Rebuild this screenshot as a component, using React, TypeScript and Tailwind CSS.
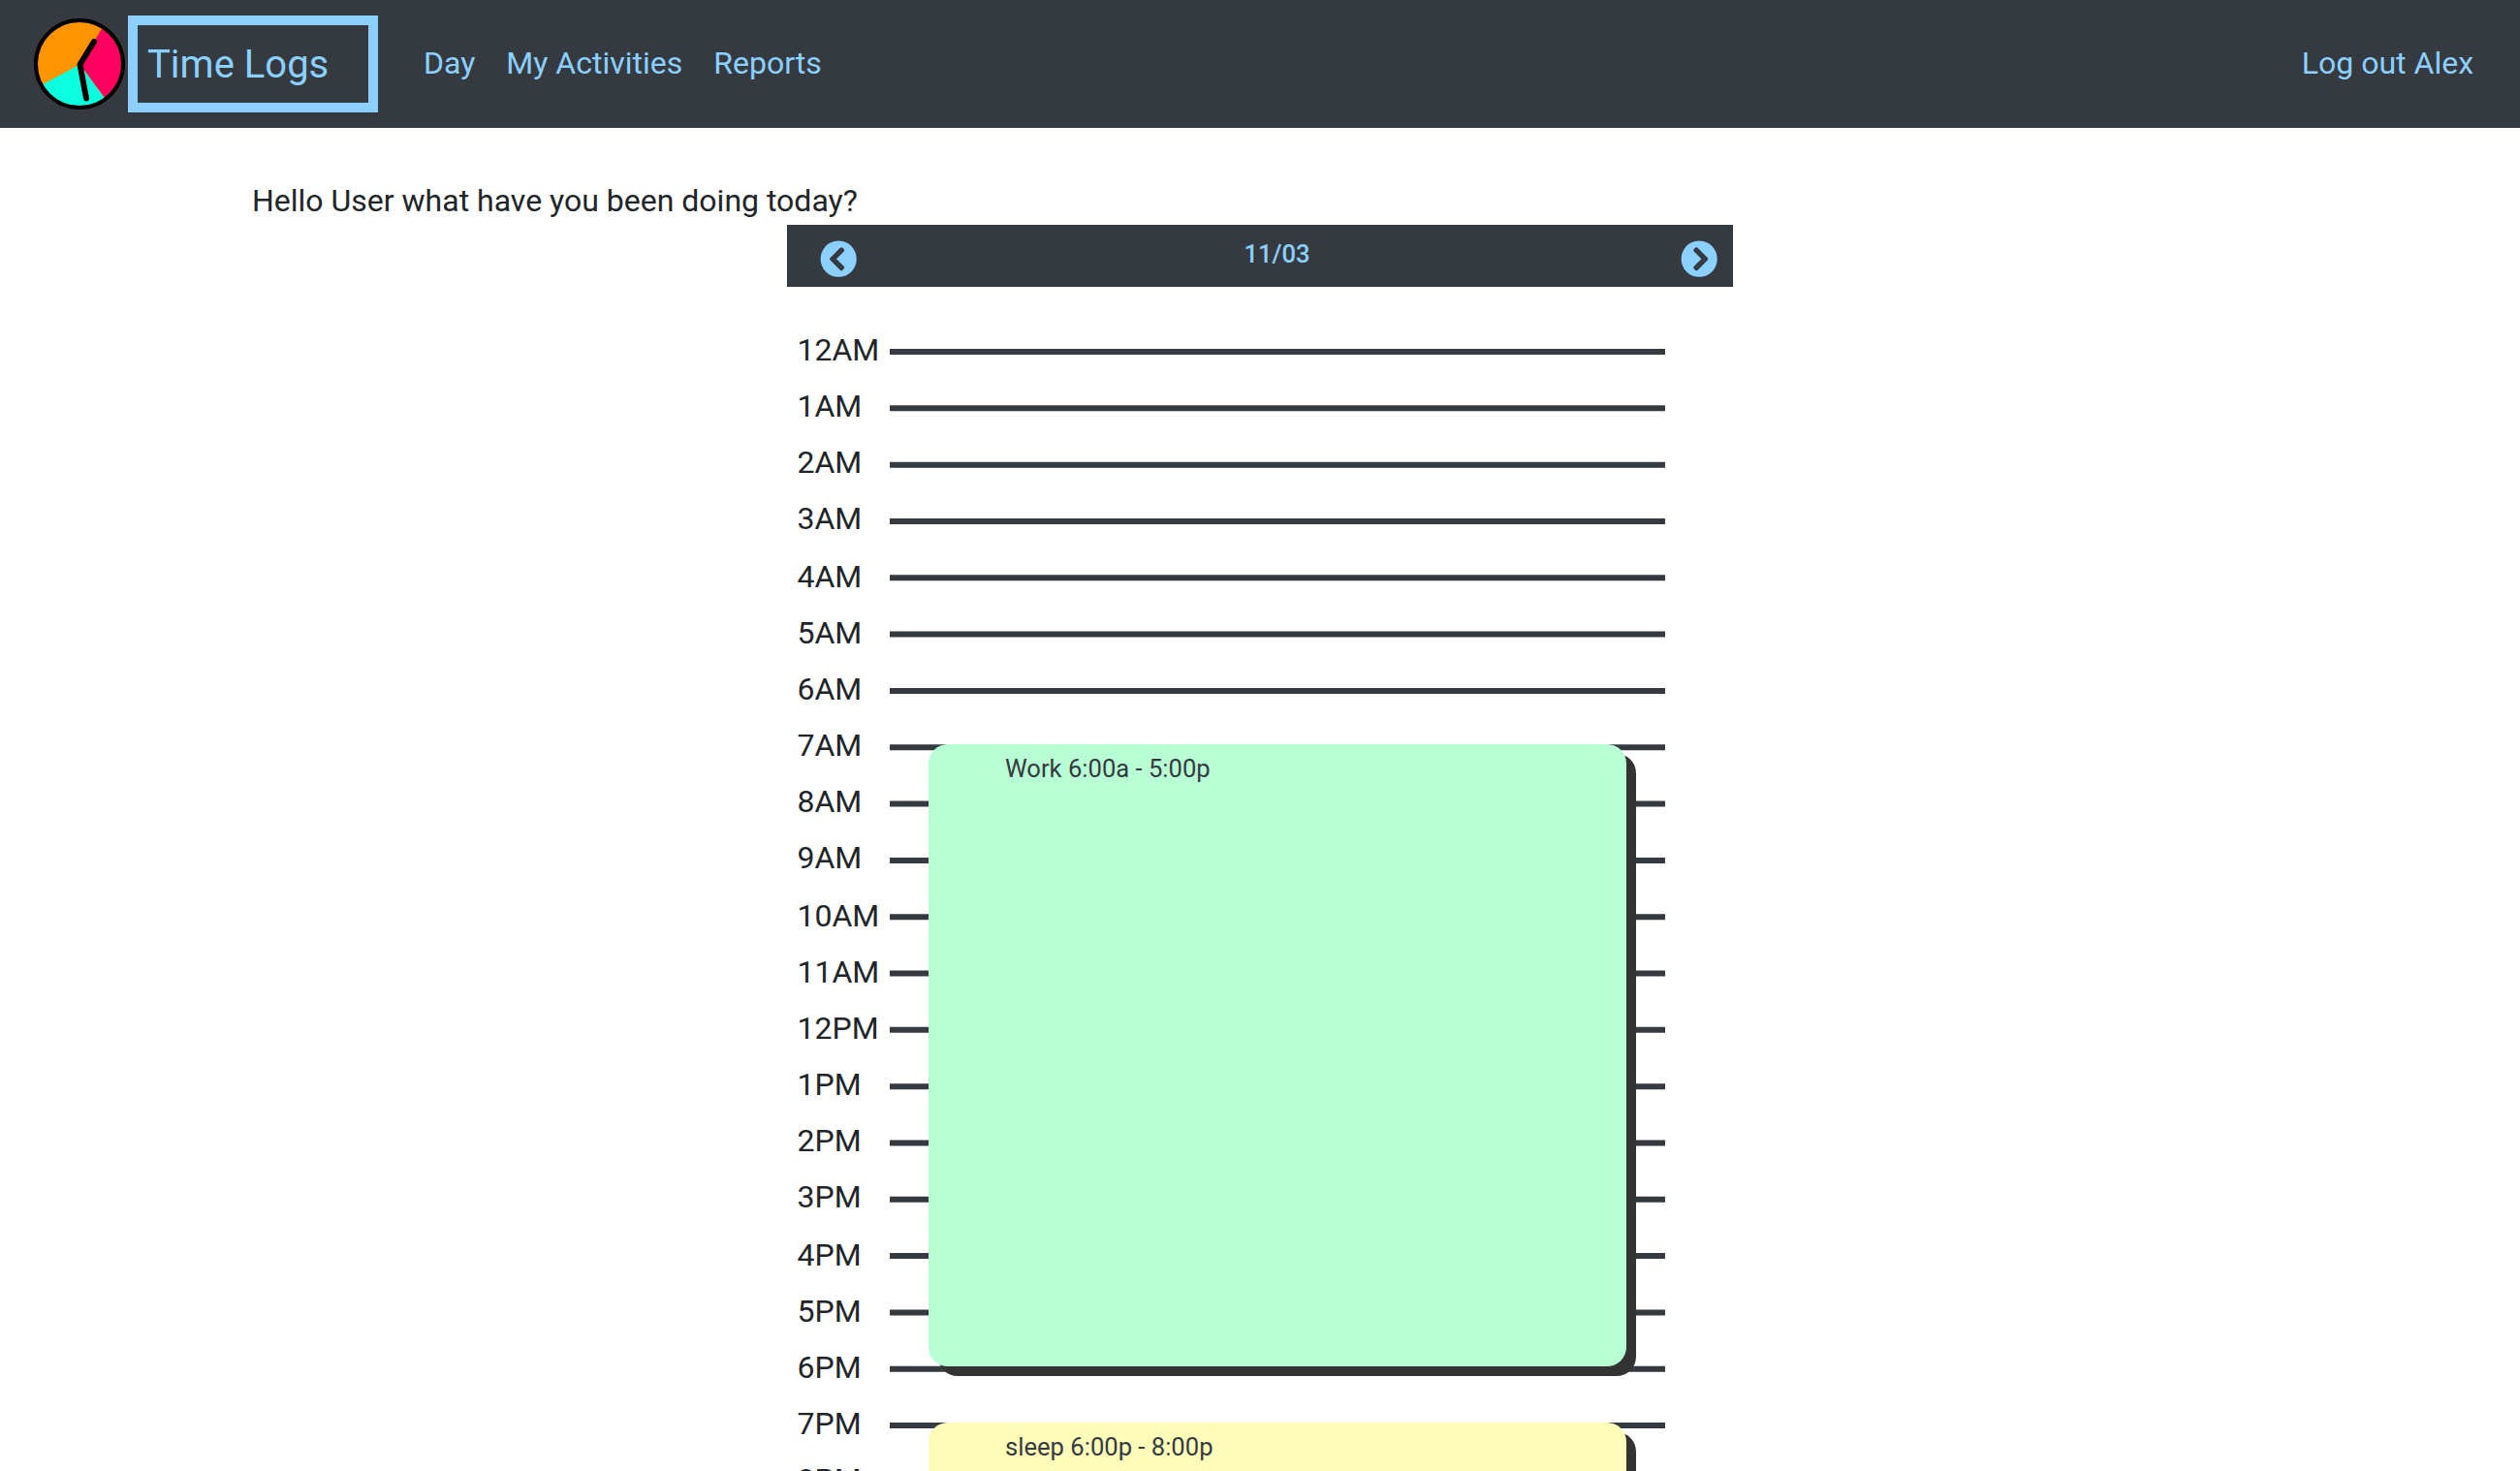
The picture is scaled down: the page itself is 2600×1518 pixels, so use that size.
import { FaChevronCircleLeft, FaChevronCircleRight } from "react-icons/fa";

const HOUR_PITCH = 58.32;

const hours = Array.from({ length: 20 + 1 }, (_, i) => `${i % 12 === 0 ? 12 : i % 12}${i < 12 ? "AM" : "PM"}`);

// Label rows land on even pixels while the rules keep the exact pitch.
const rowTop = (i: number) => 2 * Math.round((HOUR_PITCH * i) / 2);

const activities = [
  { label: "Work 6:00a - 5:00p", color: "bg-[#b9ffd5]", top: 472, height: 642 },
  { label: "sleep 6:00p - 8:00p", color: "bg-[#fffdb9]", top: 1172, height: 117 },
];

function Logo() {
  return (
    <svg className="h-[94px] w-[94px] shrink-0" viewBox="0 0 94 94" fill="none">
      <clipPath id="face">
        <circle cx="47" cy="47" r="44" />
      </clipPath>
      <g clipPath="url(#face)">
        <rect width="94" height="94" fill="#ff9300" />
        <path d="M47.5 47.5 76.5 0H94V94H82Z" fill="#ff0060" />
        <path d="M47.5 47.5 81.5 94H0V72.8Z" fill="#09ffdd" />
      </g>
      <circle cx="47" cy="47" r="45" stroke="#000" strokeWidth="4" />
      <path d="M62 24 47.5 47.5 54 82.5" stroke="#000" strokeWidth="6" strokeLinecap="round" strokeLinejoin="round" />
    </svg>
  );
}

function Navbar() {
  return (
    <nav className="flex h-[132px] items-center bg-[#343a40] pr-12 pl-[35px] text-[32px] leading-[48px] text-[#8cd0ff]">
      <Logo />
      <a className="ml-[3px] flex h-[100px] w-[258px] items-center border-[10px] border-[#8cd0ff] pt-[2px] pl-[10px] text-[40px] leading-[60px]">
        Time Logs
      </a>
      <div className="ml-[47px] flex flex-1 gap-8 pb-[2px]">
        <a>Day</a>
        <a>My Activities</a>
        <a>Reports</a>
      </div>
      <a className="pb-[2px]">Log out Alex</a>
    </nav>
  );
}

function DateBar() {
  return (
    <div className="flex h-16 items-start justify-between bg-[#343a40] pr-4 pl-[34px] text-[#8cd0ff]">
      <FaChevronCircleLeft className="mt-4 h-[38.4px] w-[38.4px]" />
      <span className="mt-[15px] ml-[17px] text-[25.6px] leading-[31px] font-medium">11/03</span>
      <FaChevronCircleRight className="mt-4 h-[38.4px] w-[38.4px]" />
    </div>
  );
}

function Schedule() {
  return (
    <div className="relative flex pt-[41px] pl-[10px]">
      <div className="w-24 shrink-0">
        {hours.map((h, i) => (
          <div key={h} style={{ height: rowTop(i + 1) - rowTop(i) }} className="pl-[0.5px] leading-[48px]">
            {h}
          </div>
        ))}
      </div>
      <svg className="h-[1220px] w-[800px] shrink-0" viewBox="0 0 800 1220" stroke="#343a40" strokeWidth="6">
        {hours.map((h, i) => (
          <line key={h} x1="0" x2="800" y1={26 + i * HOUR_PITCH} y2={26 + i * HOUR_PITCH} />
        ))}
      </svg>
      {activities.map((a) => (
        <div
          key={a.label}
          style={{ top: a.top, height: a.height }}
          className={`absolute left-[146px] w-[720px] rounded-[20px] pt-[6px] pl-[79px] text-[25.6px] leading-[38.4px] text-[#343a40] shadow-[10px_10px_0_#333] ${a.color}`}
        >
          {a.label}
        </div>
      ))}
    </div>
  );
}

export default function App() {
  return (
    <div className="h-[1518px] overflow-hidden bg-white font-['Roboto',sans-serif] text-[32px] text-[#212529]">
      <Navbar />
      <main className="px-[260px] pt-[51px]">
        <p className="mb-px leading-[48px]">Hello User what have you been doing today?</p>
        <div className="mx-auto w-[976px]">
          <DateBar />
          <Schedule />
        </div>
      </main>
    </div>
  );
}
